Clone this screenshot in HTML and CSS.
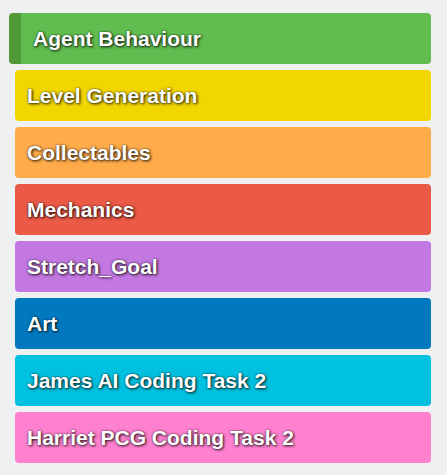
FILE: index.html
```html
<!DOCTYPE html>
<html>
<head>
<meta charset="utf-8">
<link rel="stylesheet" href="styles.css">
</head>
<body>
<div class="list">
  <div class="card green dragging">Agent Behaviour</div>
  <div class="card yellow">Level Generation</div>
  <div class="card orange">Collectables</div>
  <div class="card red">Mechanics</div>
  <div class="card purple">Stretch_Goal</div>
  <div class="card blue">Art</div>
  <div class="card sky">James AI Coding Task 2</div>
  <div class="card pink">Harriet PCG Coding Task 2</div>
</div>
</body>
</html>
```
FILE: styles.css
```css
html, body {
  margin: 0;
  padding: 0;
  background: #eff0f2;
}
.list {
  display: flex;
  flex-direction: column;
  gap: 6px;
  padding: 13px 0 0 15px;
  width: 416px;
}
.card {
  height: 51px;
  box-sizing: border-box;
  display: flex;
  align-items: center;
  padding-left: 12px;
  padding-top: 1px;
  border-radius: 4px;
  font-family: "Liberation Sans", Arial, sans-serif;
  font-weight: bold;
  font-size: 21px;
  color: #fff;
  text-shadow: 1px 1px 3px rgba(0,0,0,0.85), 0 0 2px rgba(0,0,0,0.6);
}
.dragging {
  margin-left: -6px;
  border-left: 12px solid #519839;
}
.green { background: #61bd4f; }
.yellow { background: #f2d600; }
.orange { background: #ffab4a; }
.red { background: #eb5a46; }
.purple { background: #c377e0; }
.blue { background: #0079bf; }
.sky { background: #00c2e0; }
.pink { background: #ff80ce; }
```
